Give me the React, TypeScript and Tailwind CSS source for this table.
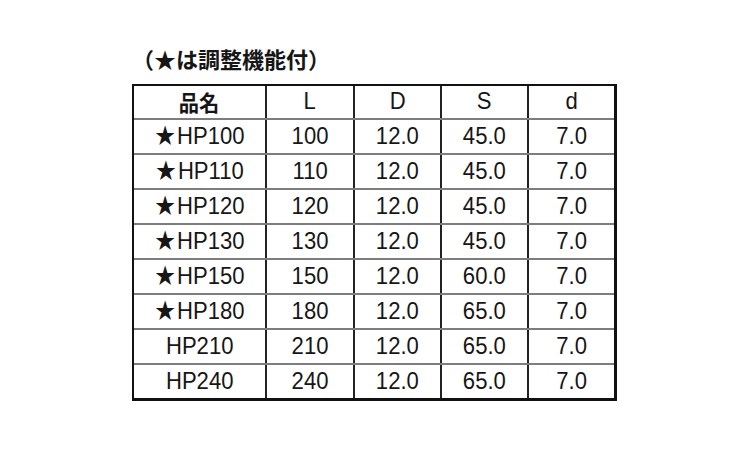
import React from "react";

const rows: [boolean, string, string, string, string, string][] = [
  [true, "HP100", "100", "12.0", "45.0", "7.0"],
  [true, "HP110", "110", "12.0", "45.0", "7.0"],
  [true, "HP120", "120", "12.0", "45.0", "7.0"],
  [true, "HP130", "130", "12.0", "45.0", "7.0"],
  [true, "HP150", "150", "12.0", "60.0", "7.0"],
  [true, "HP180", "180", "12.0", "65.0", "7.0"],
  [false, "HP210", "210", "12.0", "65.0", "7.0"],
  [false, "HP240", "240", "12.0", "65.0", "7.0"],
];

const font = { fontFamily: '"Liberation Sans", "Noto Sans CJK JP", sans-serif' };
const cjk = { fontFamily: '"Noto Sans CJK JP", sans-serif' };

function Row({ cells, first }: { cells: React.ReactNode[]; first?: boolean }) {
  return (
    <div
      className={`grid grid-cols-[131px_88px_87px_87px_87px] ${
        first ? "h-[32px]" : "h-[35px] border-t-2 border-[#7d7d7d]"
      }`}
    >
      {cells.map((c, i) => (
        <div
          key={i}
          className={`flex items-center justify-center text-[24px] leading-none text-[#161616] ${
            i > 0 ? "border-l-2 border-[#222]" : ""
          }`}
        >
          <span className="inline-flex items-center scale-x-[0.92] -translate-y-[1px]">{c}</span>
        </div>
      ))}
    </div>
  );
}

export default function App() {
  return (
    <div className="w-[750px] h-[450px] bg-white pt-[45px] pl-[132px]" style={font}>
      <div className="text-[22px] leading-[27px] font-bold text-[#161616]" style={cjk}>
        （★は調整機能付）
      </div>
      <div className="mt-[12px] w-[485px] border-l-2 border-t-2 border-r-[3px] border-b-[3px] border-[#111]">
        <Row
          first
          cells={[
            <span style={cjk} className="text-[22px] font-bold">品名</span>,
            "L",
            "D",
            "S",
            "d",
          ]}
        />
        {rows.map((r) => (
          <Row
            key={r[1]}
            cells={[
              <span className="flex items-center">
                {r[0] && (
                  <span style={cjk} className="text-[22px] mr-[2px] -translate-y-[3px]">★</span>
                )}
                {r[1]}
              </span>,
              r[2],
              r[3],
              r[4],
              r[5],
            ]}
          />
        ))}
      </div>
    </div>
  );
}
